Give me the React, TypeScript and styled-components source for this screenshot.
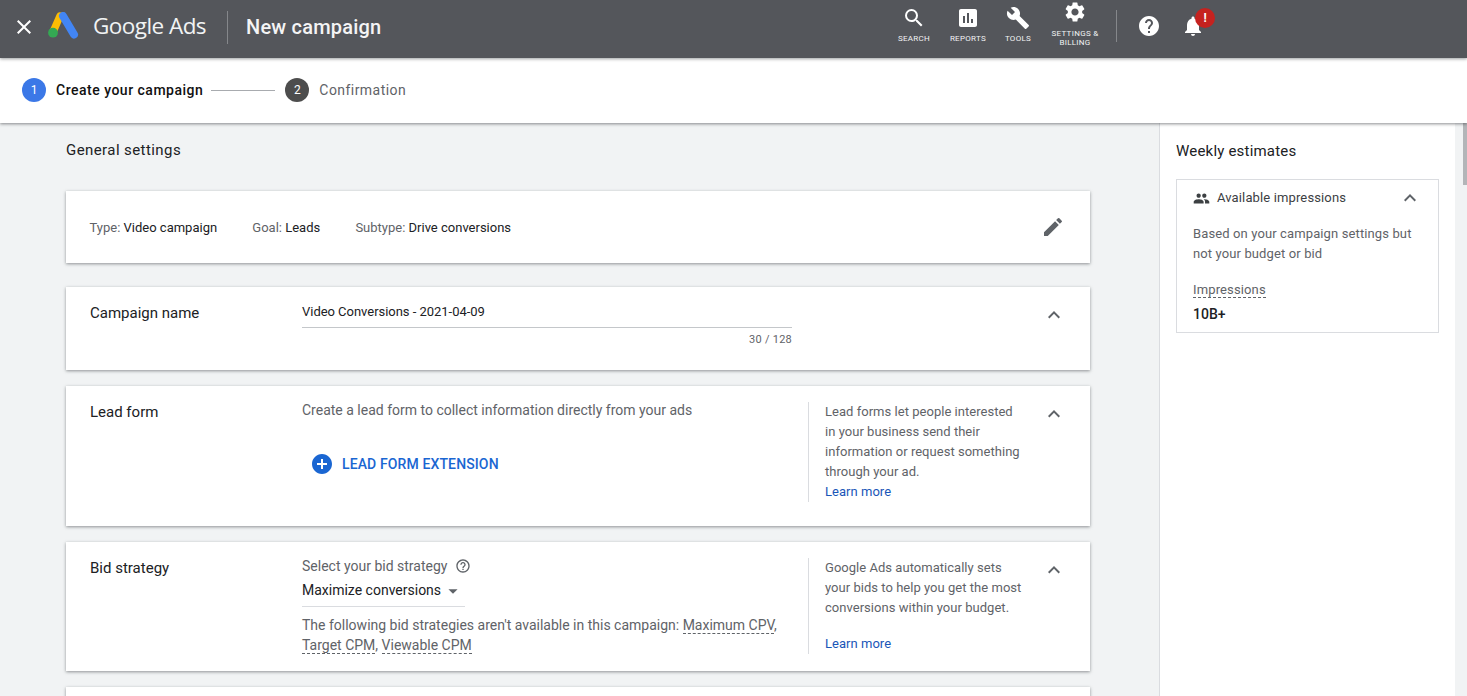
import React from "react";
import styled, { createGlobalStyle } from "styled-components";
import {
  MdClose, MdSearch, MdAssessment, MdBuild, MdSettings, MdHelp, MdNotifications,
  MdEdit, MdExpandLess, MdPeople, MdAddCircle, MdHelpOutline, MdArrowDropDown,
} from "react-icons/md";

const Global = createGlobalStyle`
  html, body { margin: 0; padding: 0; height: 100%; background: #fff; }
  body { font-family: Roboto, "Liberation Sans", sans-serif; font-size: 13px; color: #202124; overflow: hidden; }
  * { box-sizing: border-box; }
  #root { height: 696px; }
`;

const Page = styled.div`
  height: 696px; display: flex; flex-direction: column; overflow: hidden;
`;
const Header = styled.header`
  height: 58px; flex: none; background: #54565b; color: #fff; display: flex; align-items: center;
  padding: 0 0 4px 12px; position: relative; z-index: 3; box-shadow: 0 1px 3px rgba(60,64,67,.5);
`;
const CloseBtn = styled.div`
  width: 24px; height: 24px; font-size: 24px; display: flex; margin-right: 11px;
`;
const LogoMark = styled.svg`
  width: 32px; height: 28px; margin-right: 14px; flex: none; margin-top: -2px;
`;
const Brand = styled.div`
  font-family: "Open Sans", Roboto, sans-serif; font-size: 22.5px; letter-spacing: -0.55px; color: #f1f3f4;
  width: 135px; height: 33px; line-height: 30px; border-right: 1px solid #85878b; flex: none; white-space: nowrap;
`;
const PageTitle = styled.div`
  font-size: 20px; font-weight: 500; margin-left: 18px; letter-spacing: 0.2px; color: #f4f4f5;
`;
const Nav = styled.nav`
  margin-left: auto; align-self: flex-start; display: flex; align-items: flex-start; height: 58px; padding-right: 262px;
`;
const NavItem = styled.div<{ $w: number; $top: number }>`
  width: ${(p) => p.$w}px; display: flex; flex-direction: column; align-items: center;
  text-transform: uppercase; font-size: 8px; line-height: 9px; letter-spacing: 0.3px; font-weight: 400;
  text-align: center; color: #f1f3f4; padding-top: ${(p) => p.$top}px;
  svg { font-size: 24px; color: #fff; flex: none; }
`;
const NavLabel = styled.span<{ $top: number }>` margin-top: ${(p) => p.$top}px; `;
const NavDivider = styled.div`
  width: 1px; height: 32px; background: #85878b; margin: 10px 20px 0 7px;
`;
const IconSlot = styled.div`
  position: relative; width: 24px; height: 24px; margin-top: 14px; font-size: 24px; color: #fff; display: flex;
`;
const BellSlot = styled(IconSlot)` margin-left: 20px; `;
const Badge = styled.div`
  position: absolute; left: 14px; top: -6px; width: 20px; height: 20px; border-radius: 50%;
  background: #c5221f; color: #fff; font-size: 12px; font-weight: 700; line-height: 20px; text-align: center;
`;
const Stepper = styled.div`
  height: 65px; flex: none; background: #fff; display: flex; align-items: center; padding: 0 0 1px 22px;
  box-shadow: 0 1px 3px rgba(60,64,67,.6); position: relative; z-index: 2;
`;
const StepDot = styled.div<{ $on?: boolean }>`
  width: 24px; height: 24px; border-radius: 50%; background: ${(p) => (p.$on ? "#3b78e7" : "#4d4d4d")};
  color: #fff; font-size: 12px; line-height: 24px; text-align: center; flex: none;
`;
const StepText = styled.div<{ $on?: boolean }>`
  margin-left: 10px; font-size: 14px; letter-spacing: ${(p) => (p.$on ? "0.5px" : "0.45px")};
  font-weight: ${(p) => (p.$on ? 500 : 400)}; color: ${(p) => (p.$on ? "#111" : "#5f6368")};
`;
const StepLine = styled.div`
  width: 64px; height: 1px; background: #a8abaf; margin: 0 10px 0 8px;
`;
const Body = styled.div`
  flex: 1; min-height: 0; display: flex; overflow: hidden;
`;
const Main = styled.main`
  flex: 1; background: #f1f3f4; padding: 18px 69px 0 66px; display: flex; flex-direction: column;
`;
const SectionTitle = styled.h2`
  margin: 0 0 32px; font-size: 15px; line-height: 18px; font-weight: 400; color: #202124; letter-spacing: 0.42px;
`;
const Card = styled.section<{ $h: number; $mb: number }>`
  flex: none; height: ${(p) => p.$h}px; margin-bottom: ${(p) => p.$mb}px; background: #fff;
  box-shadow: 0 1px 3px rgba(60,64,67,.55);
`;
const SummaryCard = styled(Card)`
  display: flex; align-items: center; padding: 0 25px 0 23.5px; font-size: 13px; letter-spacing: 0;
`;
const SummaryItem = styled.div`
  margin-right: 35.2px; color: #202124; span { color: #5f6368; }
`;
const EditIcon = styled.div`
  margin-left: auto; font-size: 24px; color: #5f6368; display: flex; margin-top: -1px;
`;
const RowCard = styled(Card)`
  display: grid; grid-template-columns: 212px 506px 1fr 38px; padding: 16px 17px 0 24px; align-items: start;
`;
const RowTitle = styled.h3`
  margin: 0; font-size: 15px; line-height: 20px; font-weight: 400; color: #202124; letter-spacing: 0;
`;
const RowBody = styled.div`
  margin-top: -2px; font-size: 14px; line-height: 20px; color: #5f6368; letter-spacing: 0;
`;
const Aside = styled.aside<{ $h: number }>`
  border-left: 1px solid #dadce0; padding: 0 10px 0 16px; height: ${(p) => p.$h}px; font-size: 13px; line-height: 20px;
  color: #5f6368; letter-spacing: 0.03px;
`;
const SpacedLink = styled.a<{ $top?: number }>`
  display: block; color: #1a56b8; margin-top: ${(p) => p.$top || 0}px;
`;
const Chevron = styled.div`
  font-size: 24px; color: #5f6368; display: flex; justify-content: center;
`;
const NameInput = styled.div`
  width: 490px; height: 27px; border-bottom: 1px solid #c4c7ca; font-size: 13px; line-height: 16px; color: #202124;
  letter-spacing: -0.03px; padding-top: 3px;
`;
const Counter = styled.div`
  width: 490px; text-align: right; font-size: 11px; line-height: 14px; margin-top: 5px; color: #5f6368; letter-spacing: 0.25px;
`;
const AddRow = styled.div`
  display: flex; align-items: center; margin: 32px 0 0 8px; color: #1a66d2; font-weight: 500; font-size: 14px; letter-spacing: 0.12px;
  svg { font-size: 24px; margin-right: 8px; color: #1a66d2; }
`;
const LabelRow = styled.div`
  display: flex; align-items: center; svg { font-size: 16px; margin-left: 8px; }
`;
const Select = styled.div`
  width: 163px; height: 27px; margin-top: 4px; border-bottom: 1px solid #dadce0; color: #202124; display: flex; align-items: flex-start;
  line-height: 20px; white-space: nowrap; svg { font-size: 22px; margin-left: 1px; color: #5f6368; flex: none; }
`;
const Note = styled.div` margin-top: 8px; `;
const Dashed = styled.span`
  border-bottom: 1px dashed #5f6368; padding-bottom: 0;
`;
const Side = styled.aside`
  width: 296px; flex: none; background: #fff; border-left: 1px solid #dadce0; padding: 18px 16px 0 16px;
`;
const SideTitle = styled.h2`
  margin: 0 0 18px; font-size: 15px; line-height: 20px; font-weight: 400; letter-spacing: 0.2px; color: #202124;
`;
const EstimateBox = styled.div`
  border: 1px solid #dadce0; height: 154px; padding: 8px 17px 0 16px; font-size: 13px;
`;
const EstimateHead = styled.div`
  display: flex; align-items: center; height: 20px; color: #3c4043; letter-spacing: 0.13px; line-height: 20px;
`;
const PeopleIcon = styled.div` font-size: 17px; display: flex; margin-right: 7px; color: #3c4043; `;
const EstimateChevron = styled.div` margin-left: auto; margin-right: -1px; font-size: 24px; display: flex; color: #5f6368; `;
const EstimateText = styled.p`
  margin: 16px 0 0; line-height: 20px; color: #5f6368; letter-spacing: 0.12px;
`;
const MetricLabel = styled.div` margin-top: 17px; line-height: 18px; color: #5f6368; letter-spacing: 0.13px; `;
const MetricValue = styled.div` margin-top: 6px; font-size: 14px; font-weight: 500; color: #202124; line-height: 18px; `;
const ScrollTrack = styled.div`
  width: 12px; flex: none; background: #f1f3f4; display: flex; justify-content: flex-end;
`;
const ScrollThumb = styled.div` width: 4px; height: 62px; background: #b3b5b8; `;

const Logo = () => (
  <LogoMark viewBox="0 0 32 28">
    <path d="M13 4 L6 20" stroke="#fbbc04" strokeWidth="7.4" strokeLinecap="round" />
    <path d="M16 4 L27 22.5" stroke="#4285f4" strokeWidth="8" strokeLinecap="round" />
    <circle cx="6" cy="20.7" r="4.9" fill="#34a853" />
  </LogoMark>
);

export default function App() {
  return (
    <Page>
      <Global />
      <Header>
        <CloseBtn><MdClose /></CloseBtn>
        <Logo />
        <Brand>Google Ads</Brand>
        <PageTitle>New campaign</PageTitle>
        <Nav>
          <NavItem $w={54} $top={6}><MdSearch /><NavLabel $top={4}>Search</NavLabel></NavItem>
          <NavItem $w={54} $top={6}><MdAssessment /><NavLabel $top={4}>Reports</NavLabel></NavItem>
          <NavItem $w={46} $top={6}><MdBuild /><NavLabel $top={4}>Tools</NavLabel></NavItem>
          <NavItem $w={68} $top={0}><MdSettings /><NavLabel $top={5}>Settings &<br />Billing</NavLabel></NavItem>
          <NavDivider />
          <IconSlot><MdHelp /></IconSlot>
          <BellSlot><MdNotifications /><Badge>!</Badge></BellSlot>
        </Nav>
      </Header>
      <Stepper>
        <StepDot $on>1</StepDot>
        <StepText $on>Create your campaign</StepText>
        <StepLine />
        <StepDot>2</StepDot>
        <StepText>Confirmation</StepText>
      </Stepper>
      <Body>
        <Main>
          <SectionTitle>General settings</SectionTitle>
          <SummaryCard $h={72} $mb={24}>
            <SummaryItem><span>Type:</span> Video campaign</SummaryItem>
            <SummaryItem><span>Goal:</span> Leads</SummaryItem>
            <SummaryItem><span>Subtype:</span> Drive conversions</SummaryItem>
            <EditIcon><MdEdit /></EditIcon>
          </SummaryCard>
          <RowCard $h={83} $mb={16}>
            <RowTitle>Campaign name</RowTitle>
            <RowBody>
              <NameInput>Video Conversions - 2021-04-09</NameInput>
              <Counter>30 / 128</Counter>
            </RowBody>
            <div />
            <Chevron><MdExpandLess /></Chevron>
          </RowCard>
          <RowCard $h={140} $mb={16}>
            <RowTitle>Lead form</RowTitle>
            <RowBody>
              Create a lead form to collect information directly from your ads
              <AddRow><MdAddCircle />LEAD FORM EXTENSION</AddRow>
            </RowBody>
            <Aside $h={100}>
              Lead forms let people interested in your business send their information or request something through your ad.
              <SpacedLink>Learn more</SpacedLink>
            </Aside>
            <Chevron><MdExpandLess /></Chevron>
          </RowCard>
          <RowCard $h={129} $mb={16}>
            <RowTitle>Bid strategy</RowTitle>
            <RowBody>
              <LabelRow>Select your bid strategy<MdHelpOutline /></LabelRow>
              <Select>Maximize conversions<MdArrowDropDown /></Select>
              <Note>
                The following bid strategies aren't available in this campaign: <Dashed>Maximum CPV</Dashed>,{" "}
                <Dashed>Target CPM</Dashed>, <Dashed>Viewable CPM</Dashed>
              </Note>
            </RowBody>
            <Aside $h={96}>
              Google Ads automatically sets your bids to help you get the most conversions within your budget.
              <SpacedLink $top={16}>Learn more</SpacedLink>
            </Aside>
            <Chevron><MdExpandLess /></Chevron>
          </RowCard>
          <Card $h={60} $mb={0} />
        </Main>
        <Side>
          <SideTitle>Weekly estimates</SideTitle>
          <EstimateBox>
            <EstimateHead>
              <PeopleIcon><MdPeople /></PeopleIcon>
              Available impressions
              <EstimateChevron><MdExpandLess /></EstimateChevron>
            </EstimateHead>
            <EstimateText>Based on your campaign settings but not your budget or bid</EstimateText>
            <MetricLabel><Dashed>Impressions</Dashed></MetricLabel>
            <MetricValue>10B+</MetricValue>
          </EstimateBox>
        </Side>
        <ScrollTrack><ScrollThumb /></ScrollTrack>
      </Body>
    </Page>
  );
}
